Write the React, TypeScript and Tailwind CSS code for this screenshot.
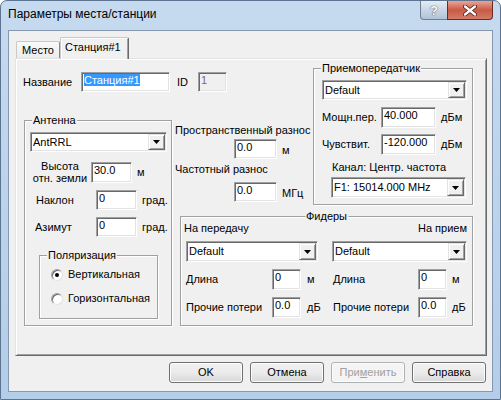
import React from "react";

const sunken =
  "border border-t-[#a0a0a0] border-l-[#a0a0a0] border-b-white border-r-white shadow-[inset_1px_1px_0_#696969,inset_-1px_-1px_0_#e3e3e3]";
const raised =
  "border border-t-[#e3e3e3] border-l-[#e3e3e3] border-b-[#696969] border-r-[#696969] shadow-[inset_1px_1px_0_#fff,inset_-1px_-1px_0_#a0a0a0]";

type BoxProps = {
  className?: string;
  children?: React.ReactNode;
  disabled?: boolean;
};

function Edit({ className = "", children, disabled = false }: BoxProps) {
  return (
    <div
      className={`${sunken} ${
        disabled ? "bg-[#f0f0f0] text-[#6d6d6d]" : "bg-white text-black"
      } pl-[2px] pt-[1px] overflow-hidden whitespace-nowrap shrink-0 ${className}`}
    >
      {children}
    </div>
  );
}

function Combo({ className = "", children }: BoxProps) {
  return (
    <div className={`${sunken} bg-white p-[1px] flex shrink-0 ${className}`}>
      <div className="flex-1 pl-[1px] flex items-center whitespace-nowrap overflow-hidden">
        {children}
      </div>
      <div className={`${raised} w-[17px] bg-[#f0f0f0] flex items-center justify-center`}>
        <svg width="7" height="4" viewBox="0 0 7 4">
          <polygon points="0,0 7,0 3.5,4" fill="#000" />
        </svg>
      </div>
    </div>
  );
}

function Group({
  label,
  className = "",
  center = false,
  children,
}: {
  label: string;
  className?: string;
  center?: boolean;
  children?: React.ReactNode;
}) {
  return (
    <div
      className={`relative border border-[#a0a0a0] shadow-[inset_1px_1px_0_#fff,1px_1px_0_#fff] ${className}`}
    >
      <span
        className={`absolute -top-[7px] bg-[#f0f0f0] px-[1px] leading-[13px] whitespace-nowrap ${
          center ? "left-1/2 -translate-x-1/2" : "left-[7px]"
        }`}
      >
        {label}
      </span>
      {children}
    </div>
  );
}

function Radio({ checked, label }: { checked: boolean; label: string }) {
  return (
    <div className="h-[13px] flex items-center">
      <div className="w-[12px] h-[12px] rounded-full border border-t-[#a0a0a0] border-l-[#a0a0a0] border-b-[#e3e3e3] border-r-[#e3e3e3] bg-white shadow-[inset_1px_1px_0_#696969] flex items-center justify-center">
        {checked && <div className="w-[4px] h-[4px] rounded-full bg-black" />}
      </div>
      <span className="ml-[5px]">{label}</span>
    </div>
  );
}

function Button({
  children,
  disabled = false,
}: {
  children: React.ReactNode;
  disabled?: boolean;
}) {
  return (
    <div
      className={`w-[74px] h-[21px] rounded-[3px] border flex items-center justify-center shadow-[inset_0_0_0_1px_#fcfcfc] ${
        disabled
          ? "border-[#adb2b5] bg-[#f4f4f4] text-[#a0a0a0]"
          : "border-[#707070] bg-linear-to-b from-[#f2f2f2] via-[#ebebeb] to-[#d8d8d8] text-black"
      }`}
    >
      {children}
    </div>
  );
}

export default function App() {
  return (
    <div className="w-[501px] h-[400px] bg-white font-['Liberation_Sans',Arial,sans-serif] text-[11px] leading-[13px] text-black">
      <div className="w-full h-full rounded-t-[7px] border border-[#5d7490] bg-linear-to-b from-[#c6daef] via-[#bcd3ec] to-[#b4cde8] flex flex-col">
        {/* Title bar */}
        <div className="h-[29px] flex items-start shrink-0">
          <div className="ml-[7px] mt-[6px] text-[12px] leading-[15px]">
            Параметры места/станции
          </div>
          <div className="ml-auto mr-[7px] flex">
            <div className="w-[27px] h-[19px] rounded-bl-[4px] border border-t-0 border-r-0 border-[#6e7f94] bg-linear-to-b from-[#e4ecf5] via-[#c9d6e5] to-[#b2c3d8] flex items-center justify-center">
              <span className="text-white font-bold text-[13px] leading-[13px] [text-shadow:0_0_1px_#3b4a5c,0_0_1px_#3b4a5c]">
                ?
              </span>
            </div>
            <div className="w-[46px] h-[19px] rounded-br-[4px] border border-t-0 border-[#6b2a22] bg-linear-to-b from-[#e8a597] via-[#c95a45] to-[#d47a66] flex items-center justify-center">
              <svg width="14" height="11" viewBox="0 0 14 11">
                <path
                  d="M2 1.5 L12 9.5 M12 1.5 L2 9.5"
                  stroke="#4a1a14"
                  strokeWidth="4"
                  strokeLinecap="round"
                />
                <path
                  d="M2 1.5 L12 9.5 M12 1.5 L2 9.5"
                  stroke="#fff"
                  strokeWidth="2.4"
                  strokeLinecap="round"
                />
              </svg>
            </div>
          </div>
        </div>

        {/* Client area */}
        <div className="mx-[7px] h-[362px] bg-[#f0f0f0] border border-[#8598b0] flex flex-col pl-[6px] pt-[6px] pr-[5px]">
          {/* Tabs */}
          <div className="h-[21px] flex items-end pl-[1px] shrink-0">
            <div className="w-[44px] h-[17px] border border-b-0 border-t-[#c8c8c8] border-l-[#c8c8c8] border-r-[#8a8a8a] rounded-t-[2px] bg-linear-to-b from-[#fafafa] to-[#ebebeb] pl-[5px] flex items-center">
              Место
            </div>
            <div className="relative z-10 w-[69px] h-[22px] -mb-[1px] border border-b-0 border-t-[#c8c8c8] border-l-[#c8c8c8] border-r-[#696969] rounded-t-[2px] bg-[#f0f0f0] shadow-[inset_1px_1px_0_#fff,inset_-1px_0_0_#a0a0a0] pl-[4px] pt-[3px]">
              Станция#1
            </div>
          </div>

          {/* Tab page */}
          <div className={`${raised} w-[472px] h-[298px] shrink-0 pl-[8px] pt-[9px]`}>
            <div className="grid grid-cols-[148px_8px_133px_160px] grid-rows-[52px_85px_11px_110px]">
              {/* Name row */}
              <div className="col-span-3 col-start-1 row-start-1">
                <div className="mt-[4px] h-[20px] flex items-center -ml-[1px]">
                  <span className="w-[58px]">Название</span>
                  <Edit className="w-[89px] h-[20px]">
                    <span className="bg-[#3399ff] text-white">Станция#1</span>
                  </Edit>
                  <span className="ml-[7px] w-[21px]">ID</span>
                  <Edit disabled className="w-[29px] h-[20px]">
                    1
                  </Edit>
                </div>
              </div>

              {/* Antenna */}
              <Group label="Антенна" className="col-start-1 row-start-2 row-span-3">
                <div className="flex flex-col">
                  <Combo className="mt-[11px] ml-[5px] w-[137px] h-[20px]">AntRRL</Combo>

                  <div className="mt-[8px] h-[24px] flex items-center pl-[5px]">
                    <div className="w-[60px] text-center leading-[12px]">
                      Высота
                      <br />
                      отн. земли
                    </div>
                    <Edit className="ml-[1px] w-[41px] h-[21px]">30.0</Edit>
                    <span className="ml-[5px]">м</span>
                  </div>

                  <div className="mt-[6px] h-[20px] flex items-center pl-[11px]">
                    <span className="w-[60px]">Наклон</span>
                    <Edit className="w-[41px] h-[20px]">0</Edit>
                    <span className="ml-[5px]">град.</span>
                  </div>

                  <div className="mt-[7px] h-[20px] flex items-center pl-[10px]">
                    <span className="w-[61px]">Азимут</span>
                    <Edit className="w-[41px] h-[20px]">0</Edit>
                    <span className="ml-[5px]">град.</span>
                  </div>

                  <Group label="Поляризация" className="mt-[18px] ml-[14px] w-[119px] h-[64px]">
                    <div className="flex flex-col pl-[11px]">
                      <div className="mt-[12px]">
                        <Radio checked label="Вертикальная" />
                      </div>
                      <div className="mt-[11px]">
                        <Radio checked={false} label="Горизонтальная" />
                      </div>
                    </div>
                  </Group>
                </div>
              </Group>

              {/* Middle: separation */}
              <div className="col-start-2 col-span-2 row-start-2 flex flex-col pl-[3px] pt-[4px]">
                <span className="h-[13px] whitespace-nowrap">Пространственный разнос</span>
                <div className="mt-[2px] h-[20px] flex items-center">
                  <Edit className="ml-[59px] w-[43px] h-[20px]">0.0</Edit>
                  <span className="ml-[5px] pt-[2px]">м</span>
                </div>
                <span className="mt-[4px] h-[13px] whitespace-nowrap">Частотный разнос</span>
                <div className="mt-[6px] h-[20px] flex items-center">
                  <Edit className="ml-[59px] w-[43px] h-[20px]">0.0</Edit>
                  <span className="ml-[5px] pt-[2px]">МГц</span>
                </div>
              </div>

              {/* Transceiver */}
              <Group label="Приемопередатчик" className="col-start-4 row-start-1 row-span-2">
                <div className="flex flex-col">
                  <Combo className="mt-[11px] ml-[8px] w-[145px] h-[20px]">Default</Combo>
                  <div className="mt-[7px] h-[21px] flex items-center pl-[8px]">
                    <span className="w-[59px]">Мощн.пер.</span>
                    <Edit className="w-[55px] h-[21px]">40.000</Edit>
                    <span className="ml-[5px]">дБм</span>
                  </div>
                  <div className="mt-[6px] h-[21px] flex items-center pl-[8px]">
                    <span className="w-[59px]">Чувствит.</span>
                    <Edit className="w-[55px] h-[21px]">-120.000</Edit>
                    <span className="ml-[5px]">дБм</span>
                  </div>
                  <span className="mt-[6px] ml-[18px] h-[13px] whitespace-nowrap">
                    Канал: Центр. частота
                  </span>
                  <Combo className="mt-[3px] ml-[17px] w-[135px] h-[21px]">F1: 15014.000 MHz</Combo>
                </div>
              </Group>

              {/* Feeders */}
              <Group label="Фидеры" center className="col-start-3 col-span-2 row-start-4">
                <div className="flex flex-col">
                  <div className="mt-[5px] h-[13px] flex justify-between pl-[3px] pr-[5px]">
                    <span>На передачу</span>
                    <span>На прием</span>
                  </div>
                  <div className="mt-[6px] ml-[5px] flex">
                    <div className="w-[146px] flex flex-col">
                      <Combo className="w-[132px] h-[21px]">Default</Combo>
                      <div className="mt-[7px] h-[21px] flex items-center">
                        <span className="w-[86px]">Длина</span>
                        <Edit className="w-[29px] h-[21px]">0</Edit>
                        <span className="ml-[6px]">м</span>
                      </div>
                      <div className="mt-[7px] h-[21px] flex items-center">
                        <span className="w-[86px] whitespace-nowrap">Прочие потери</span>
                        <Edit className="w-[29px] h-[21px]">0.0</Edit>
                        <span className="ml-[6px]">дБ</span>
                      </div>
                    </div>
                    <div className="flex flex-col">
                      <Combo className="w-[135px] h-[21px]">Default</Combo>
                      <div className="mt-[7px] h-[21px] flex items-center pl-[1px]">
                        <span className="w-[85px]">Длина</span>
                        <Edit className="w-[29px] h-[21px]">0</Edit>
                        <span className="ml-[5px]">м</span>
                      </div>
                      <div className="mt-[7px] h-[21px] flex items-center pl-[1px]">
                        <span className="w-[85px] whitespace-nowrap">Прочие потери</span>
                        <Edit className="w-[29px] h-[21px]">0.0</Edit>
                        <span className="ml-[5px]">дБ</span>
                      </div>
                    </div>
                  </div>
                </div>
              </Group>
            </div>
          </div>

          {/* Dialog buttons */}
          <div className="mt-[6px] flex justify-end gap-[7px] pr-[1px]">
            <Button>OK</Button>
            <Button>Отмена</Button>
            <Button disabled>
              При<span className="underline">м</span>енить
            </Button>
            <Button>Справка</Button>
          </div>
        </div>
      </div>
    </div>
  );
}
